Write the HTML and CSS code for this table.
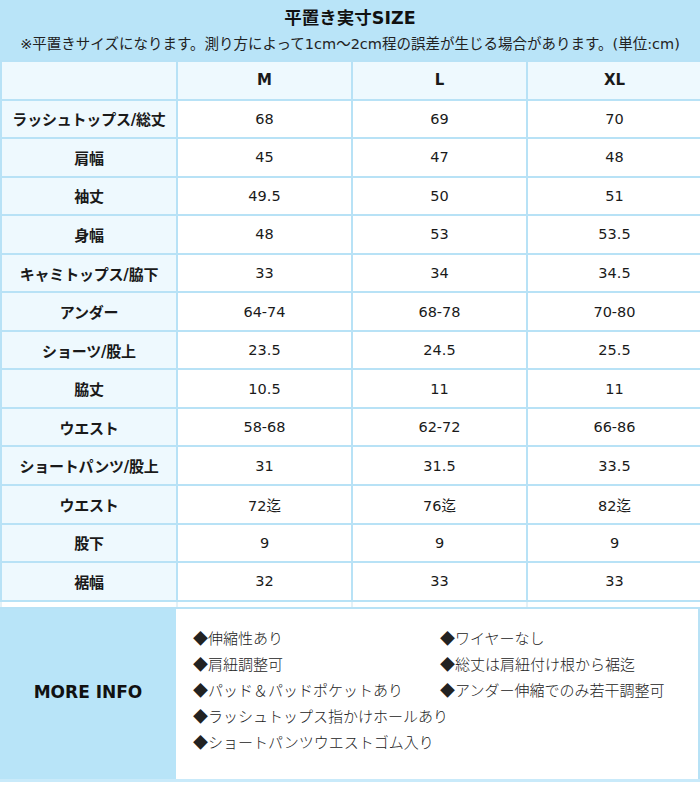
FILE: index.html
```html
<!DOCTYPE html>
<html lang="ja">
<head>
<meta charset="utf-8">
<link rel="stylesheet" href="styles.css">
</head>
<body>
<div class="sheet">
  <header class="head">
    <h1 class="title">平置き実寸SIZE</h1>
    <p class="note">※平置きサイズになります。測り方によって1cm～2cm程の誤差が生じる場合があります。(単位:cm)</p>
  </header>
  <table class="sizes">
    <colgroup><col class="c1"><col class="c"><col class="c"><col class="c"></colgroup>
    <thead>
      <tr><th class="label"></th><th>M</th><th>L</th><th>XL</th></tr>
    </thead>
    <tbody>
      <tr><th class="label">ラッシュトップス/総丈</th><td>68</td><td>69</td><td>70</td></tr>
      <tr><th class="label">肩幅</th><td>45</td><td>47</td><td>48</td></tr>
      <tr><th class="label">袖丈</th><td>49.5</td><td>50</td><td>51</td></tr>
      <tr><th class="label">身幅</th><td>48</td><td>53</td><td>53.5</td></tr>
      <tr><th class="label">キャミトップス/脇下</th><td>33</td><td>34</td><td>34.5</td></tr>
      <tr><th class="label">アンダー</th><td>64-74</td><td>68-78</td><td>70-80</td></tr>
      <tr><th class="label">ショーツ/股上</th><td>23.5</td><td>24.5</td><td>25.5</td></tr>
      <tr><th class="label">脇丈</th><td>10.5</td><td>11</td><td>11</td></tr>
      <tr><th class="label">ウエスト</th><td>58-68</td><td>62-72</td><td>66-86</td></tr>
      <tr><th class="label">ショートパンツ/股上</th><td>31</td><td>31.5</td><td>33.5</td></tr>
      <tr><th class="label">ウエスト</th><td>72迄</td><td>76迄</td><td>82迄</td></tr>
      <tr><th class="label">股下</th><td>9</td><td>9</td><td>9</td></tr>
      <tr><th class="label">裾幅</th><td>32</td><td>33</td><td>33</td></tr>
      <tr class="spacer"><td></td><td></td><td></td><td></td></tr>
    </tbody>
  </table>
  <section class="info">
    <div class="info-label">MORE INFO</div>
    <div class="info-body">
      <div class="info-grid">
        <span>◆伸縮性あり</span><span>◆ワイヤーなし</span>
        <span>◆肩紐調整可</span><span>◆総丈は肩紐付け根から裾迄</span>
        <span>◆パッド＆パッドポケットあり</span><span>◆アンダー伸縮でのみ若干調整可</span>
        <span class="wide">◆ラッシュトップス指かけホールあり</span>
        <span class="wide">◆ショートパンツウエストゴム入り</span>
      </div>
    </div>
  </section>
</div>
</body>
</html>
```

FILE: styles.css
```css
html, body {
  margin: 0;
  padding: 0;
  background: #ffffff;
}
body {
  font-family: "DejaVu Sans", Verdana, "Noto Sans CJK JP", sans-serif;
  color: #1a1a1a;
}
.sheet {
  width: 700px;
}
.head {
  background: #b9e4f8;
  height: 60px;
  box-sizing: border-box;
  padding-top: 5px;
  text-align: center;
}
.title {
  margin: 0;
  font-size: 17.5px;
  font-weight: bold;
  line-height: 26px;
  color: #111;
}
.note {
  margin: 0;
  font-size: 14.5px;
  line-height: 26px;
  color: #222;
}
.sizes {
  width: 700px;
  border-collapse: collapse;
  table-layout: fixed;
}
.c1 { width: 176px; }
.c { width: 175px; }
.sizes th, .sizes td {
  border: 2px solid #b8e2f6;
  height: 36.55px;
  padding: 0;
  text-align: center;
  font-size: 14.5px;
}
.sizes thead th {
  background: #eef9fe;
  font-weight: bold;
  font-size: 15px;
}
.sizes th.label {
  background: #eef9fe;
  font-weight: bold;
  font-size: 15px;
  letter-spacing: -0.2px;
  white-space: nowrap;
}
.sizes td {
  background: #fff;
}
.sizes tr.spacer td {
  height: 5px;
  border-color: #e4f1f7;
  border-top-color: #b8e2f6;
  border-bottom: 0;
}
.info {
  display: flex;
  height: 175px;
  border-top: 2px solid #b8e2f6;
  border-bottom: 3px solid #c9eafa;
  box-sizing: border-box;
}
.info-label {
  width: 176px;
  flex: none;
  background: #b8e4f8;
  display: flex;
  align-items: center;
  justify-content: center;
  font-weight: bold;
  font-size: 17px;
  color: #111;
  padding-bottom: 4px;
  box-sizing: border-box;
}
.info-body {
  flex: 1;
  border-right: 2px solid #b8e2f6;
  padding: 16px 0 0 17px;
}
.info-grid {
  display: grid;
  grid-template-columns: 247px auto;
  font-size: 15px;
  line-height: 26.2px;
  color: #222;
  font-family: "Noto Sans CJK JP", sans-serif;
  font-weight: 300;
}
.info-grid .wide {
  grid-column: 1 / span 2;
}
```
